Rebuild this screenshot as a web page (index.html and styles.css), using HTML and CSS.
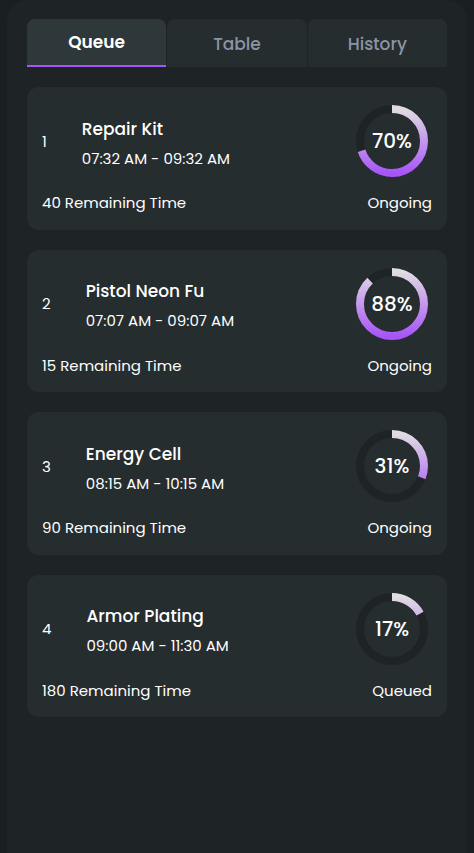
FILE: index.html
```html
<!DOCTYPE html>
<html>
<head>
<meta charset="utf-8">
<link rel="stylesheet" href="styles.css">
</head>
<body>
<svg width="0" height="0" class="defs">
  <defs>
    <linearGradient id="ringGrad" x1="68" y1="0" x2="4" y2="0" gradientUnits="userSpaceOnUse">
      <stop offset="0" stop-color="#e0dce2"/>
      <stop offset="1" stop-color="#a855f7"/>
    </linearGradient>
  </defs>
</svg>
<div class="panel">
  <div class="tabs">
    <div class="tab active">Queue</div>
    <div class="tab">Table</div>
    <div class="tab">History</div>
  </div>
  <div class="list">
    <div class="card">
      <div class="top">
        <div class="num">1</div>
        <div class="info">
          <div class="title">Repair Kit</div>
          <div class="time">07:32 AM - 09:32 AM</div>
        </div>
        <div class="ring">
          <svg viewBox="0 0 72 72" width="72" height="72">
            <circle class="track" cx="36" cy="36" r="32"/>
            <circle class="bar" cx="36" cy="36" r="32" pathLength="100" style="stroke-dasharray: 70 100"/>
          </svg>
          <span class="pct">70%</span>
        </div>
      </div>
      <div class="bottom"><span>40 Remaining Time</span><span>Ongoing</span></div>
    </div>
    <div class="card">
      <div class="top">
        <div class="num">2</div>
        <div class="info">
          <div class="title">Pistol Neon Fu</div>
          <div class="time">07:07 AM - 09:07 AM</div>
        </div>
        <div class="ring">
          <svg viewBox="0 0 72 72" width="72" height="72">
            <circle class="track" cx="36" cy="36" r="32"/>
            <circle class="bar" cx="36" cy="36" r="32" pathLength="100" style="stroke-dasharray: 88 100"/>
          </svg>
          <span class="pct">88%</span>
        </div>
      </div>
      <div class="bottom"><span>15 Remaining Time</span><span>Ongoing</span></div>
    </div>
    <div class="card">
      <div class="top">
        <div class="num">3</div>
        <div class="info">
          <div class="title">Energy Cell</div>
          <div class="time">08:15 AM - 10:15 AM</div>
        </div>
        <div class="ring">
          <svg viewBox="0 0 72 72" width="72" height="72">
            <circle class="track" cx="36" cy="36" r="32"/>
            <circle class="bar" cx="36" cy="36" r="32" pathLength="100" style="stroke-dasharray: 31 100"/>
          </svg>
          <span class="pct">31%</span>
        </div>
      </div>
      <div class="bottom"><span>90 Remaining Time</span><span>Ongoing</span></div>
    </div>
    <div class="card">
      <div class="top">
        <div class="num">4</div>
        <div class="info">
          <div class="title">Armor Plating</div>
          <div class="time">09:00 AM - 11:30 AM</div>
        </div>
        <div class="ring">
          <svg viewBox="0 0 72 72" width="72" height="72">
            <circle class="track" cx="36" cy="36" r="32"/>
            <circle class="bar" cx="36" cy="36" r="32" pathLength="100" style="stroke-dasharray: 17 100"/>
          </svg>
          <span class="pct">17%</span>
        </div>
      </div>
      <div class="bottom"><span>180 Remaining Time</span><span>Queued</span></div>
    </div>
  </div>
</div>
</body>
</html>
```
FILE: styles.css
```css
* { box-sizing: border-box; }
html, body { margin: 0; padding: 0; }
body {
  background: #1a1f21;
  font-family: "Poppins", "Inter", "Noto Sans", sans-serif;
  color: #ffffff;
  height: 853px;
  overflow: hidden;
}
.defs { position: absolute; width: 0; height: 0; }
.panel {
  margin: 0 7px;
  height: 853px;
  background: #1e2426;
  border-radius: 20px 20px 0 0;
  padding: 19px 20px;
}
.tabs {
  display: grid;
  grid-template-columns: 1fr 1fr 1fr;
  gap: 1px;
  height: 48px;
}
.tab {
  background: #262d2f;
  border-radius: 8px 8px 0 0;
  display: flex;
  align-items: center;
  justify-content: center;
  font-size: 17px;
  font-weight: 500;
  color: #8a94a4;
  padding-top: 1px;
}
.tab.active {
  background: #2e3739;
  color: #ffffff;
  font-weight: 600;
  border-bottom: 2px solid #a855f7;
  padding-top: 0;
}
.list {
  display: flex;
  flex-direction: column;
  gap: 20px;
  margin-top: 20px;
}
.card {
  background: #262d2f;
  border-radius: 12px;
  padding: 18px 15px 16px;
  height: 142.5px;
}
.top {
  display: flex;
  align-items: center;
}
.num {
  font-size: 15px;
  font-weight: 400;
  margin-right: 35px;
}
.info {
  flex: 1;
  display: flex;
  flex-direction: column;
  gap: 5px;
  padding-top: 3px;
}
.title {
  font-size: 17px;
  font-weight: 500;
}
.time {
  font-size: 15px;
  font-weight: 400;
}
.ring {
  position: relative;
  width: 72px;
  height: 72px;
  margin-right: 4px;
}
.ring svg {
  display: block;
  transform: rotate(-90deg);
}
.track {
  fill: none;
  stroke: #1e2426;
  stroke-width: 8;
}
.bar {
  fill: none;
  stroke: url(#ringGrad);
  stroke-width: 8;
}
.pct {
  position: absolute;
  inset: 0;
  display: flex;
  align-items: center;
  justify-content: center;
  font-size: 20px;
  font-weight: 500;
}
.bottom {
  display: flex;
  justify-content: space-between;
  margin-top: 14px;
  font-size: 15px;
  font-weight: 400;
}
```
